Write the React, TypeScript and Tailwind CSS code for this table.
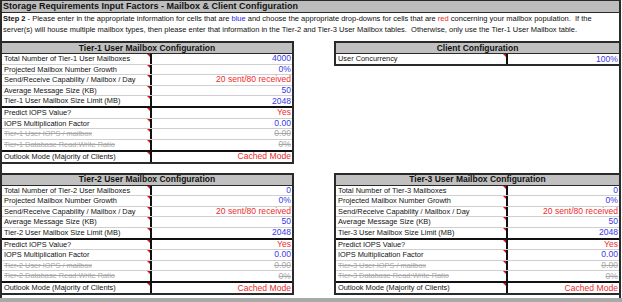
import React from "react";

type Row = { label: string; value: string; color: "blue" | "red" | "gray"; thick?: boolean };

function tierRows(n: number, total: string, totalLabel: string): Row[] {
  return [
    { label: totalLabel, value: total, color: "blue" },
    { label: "Projected Mailbox Number Growth", value: "0%", color: "blue" },
    { label: "Send/Receive Capability / Mailbox / Day", value: "20 sent/80 received", color: "red" },
    { label: "Average Message Size (KB)", value: "50", color: "blue" },
    { label: `Tier-${n} User Mailbox Size Limit (MB)`, value: "2048", color: "blue", thick: true },
    { label: "Predict IOPS Value?", value: "Yes", color: "red" },
    { label: "IOPS Multiplication Factor", value: "0.00", color: "blue" },
    { label: `Tier-${n} User IOPS / mailbox`, value: "0.00", color: "gray" },
    { label: `Tier-${n} Database Read:Write Ratio`, value: "0%", color: "gray", thick: true },
    { label: "Outlook Mode (Majority of Clients)", value: "Cached Mode", color: "red" },
  ];
}

function Marker() {
  return (
    <span className="absolute right-0 top-0 w-0 h-0 border-t-[3px] border-t-[#d81010] border-l-[3px] border-l-transparent" />
  );
}

function Table({
  title,
  rows,
  side,
}: {
  title: string;
  rows: Row[];
  side: "left" | "right";
}) {
  const outer =
    side === "left"
      ? "w-[292px] border-y-2 border-r-2 border-[#2a2a2a]"
      : "w-[285px] border-y-2 border-l-2 border-[#2a2a2a]";
  const labelW = side === "left" ? "w-[150px]" : "w-[172px]";
  return (
    <div className={outer}>
      <div className="h-[11px] bg-[#c0c0c0] border-b border-[#2a2a2a] flex items-center justify-center text-[8.5px] font-bold leading-none text-[#111]">
        {title}
      </div>
      {rows.map((r, i) => {
        const last = i === rows.length - 1;
        const rowCls = last
          ? "h-[10px]"
          : r.thick
          ? "h-[12px] border-b-2 border-[#111]"
          : "h-[10.5px] border-b border-[#cfcfcf]";
        const valColor =
          r.color === "blue"
            ? "text-[#3a3ae6]"
            : r.color === "red"
            ? "text-[#ee2b2b]"
            : "text-[#a8a8a8] line-through";
        const labColor = r.color === "gray" ? "text-[#a8a8a8] line-through" : "text-[#111]";
        return (
          <div key={i} className={`flex ${rowCls}`}>
            <div
              className={`${labelW} relative shrink-0 border-r-2 border-[#111] flex items-center pl-[2px] text-[7.4px] leading-none whitespace-nowrap ${labColor}`}
            >
              {r.label}
              <Marker />
            </div>
            <div
              className={`flex-1 flex items-center justify-end pr-[1px] text-[8.6px] leading-none whitespace-nowrap ${valColor}`}
            >
              {r.value}
            </div>
          </div>
        );
      })}
    </div>
  );
}

export default function App() {
  return (
    <div className="w-[622px] h-[302px] bg-white overflow-hidden font-['Liberation_Sans',Arial,sans-serif] text-[#111] flex flex-col">
      <div className="w-[621px] h-[298px] border-l-2 border-r-2 border-[#2a2a2a] flex flex-col">
        <div className="h-[13px] bg-[#bdbdbd] border-y border-[#2a2a2a] flex items-center pl-[1px] text-[9px] font-bold leading-none whitespace-nowrap">
          Storage Requirements Input Factors - Mailbox &amp; Client Configuration
        </div>
        <div className="h-[28px] pt-[0px] pl-[1px] text-[7.5px] leading-[11px] whitespace-nowrap text-[#111]">
          <span className="font-bold">Step 2</span> - Please enter in the appropriate information for cells
          that are <span className="text-[#2b2bf0]">blue</span> and choose the appropriate drop-downs for cells
          that are <span className="text-[#ee2b2b]">red</span> concerning your mailbox population.&nbsp; If the
          <br />
          server(s) will house multiple mailbox types, then please enter that information in the Tier-2 and Tier-3
          User Mailbox tables.&nbsp; Otherwise, only use the Tier-1 User Mailbox table.
        </div>
        <div className="flex items-start">
          <Table
            side="left"
            title="Tier-1 User Mailbox Configuration"
            rows={tierRows(1, "4000", "Total Number of Tier-1 User Mailboxes")}
          />
          <div className="ml-auto">
            <Table
              side="right"
              title="Client Configuration"
              rows={[{ label: "User Concurrency", value: "100%", color: "blue" }]}
            />
          </div>
        </div>
        <div className="flex items-start mt-[9px]">
          <Table
            side="left"
            title="Tier-2 User Mailbox Configuration"
            rows={tierRows(2, "0", "Total Number of Tier-2 User Mailboxes")}
          />
          <div className="ml-auto">
            <Table
              side="right"
              title="Tier-3 User Mailbox Configuration"
              rows={tierRows(3, "0", "Total Number of Tier-3 Mailboxes")}
            />
          </div>
        </div>
      </div>
      <div className="h-[4px] bg-[#a9a9a9]" />
    </div>
  );
}
